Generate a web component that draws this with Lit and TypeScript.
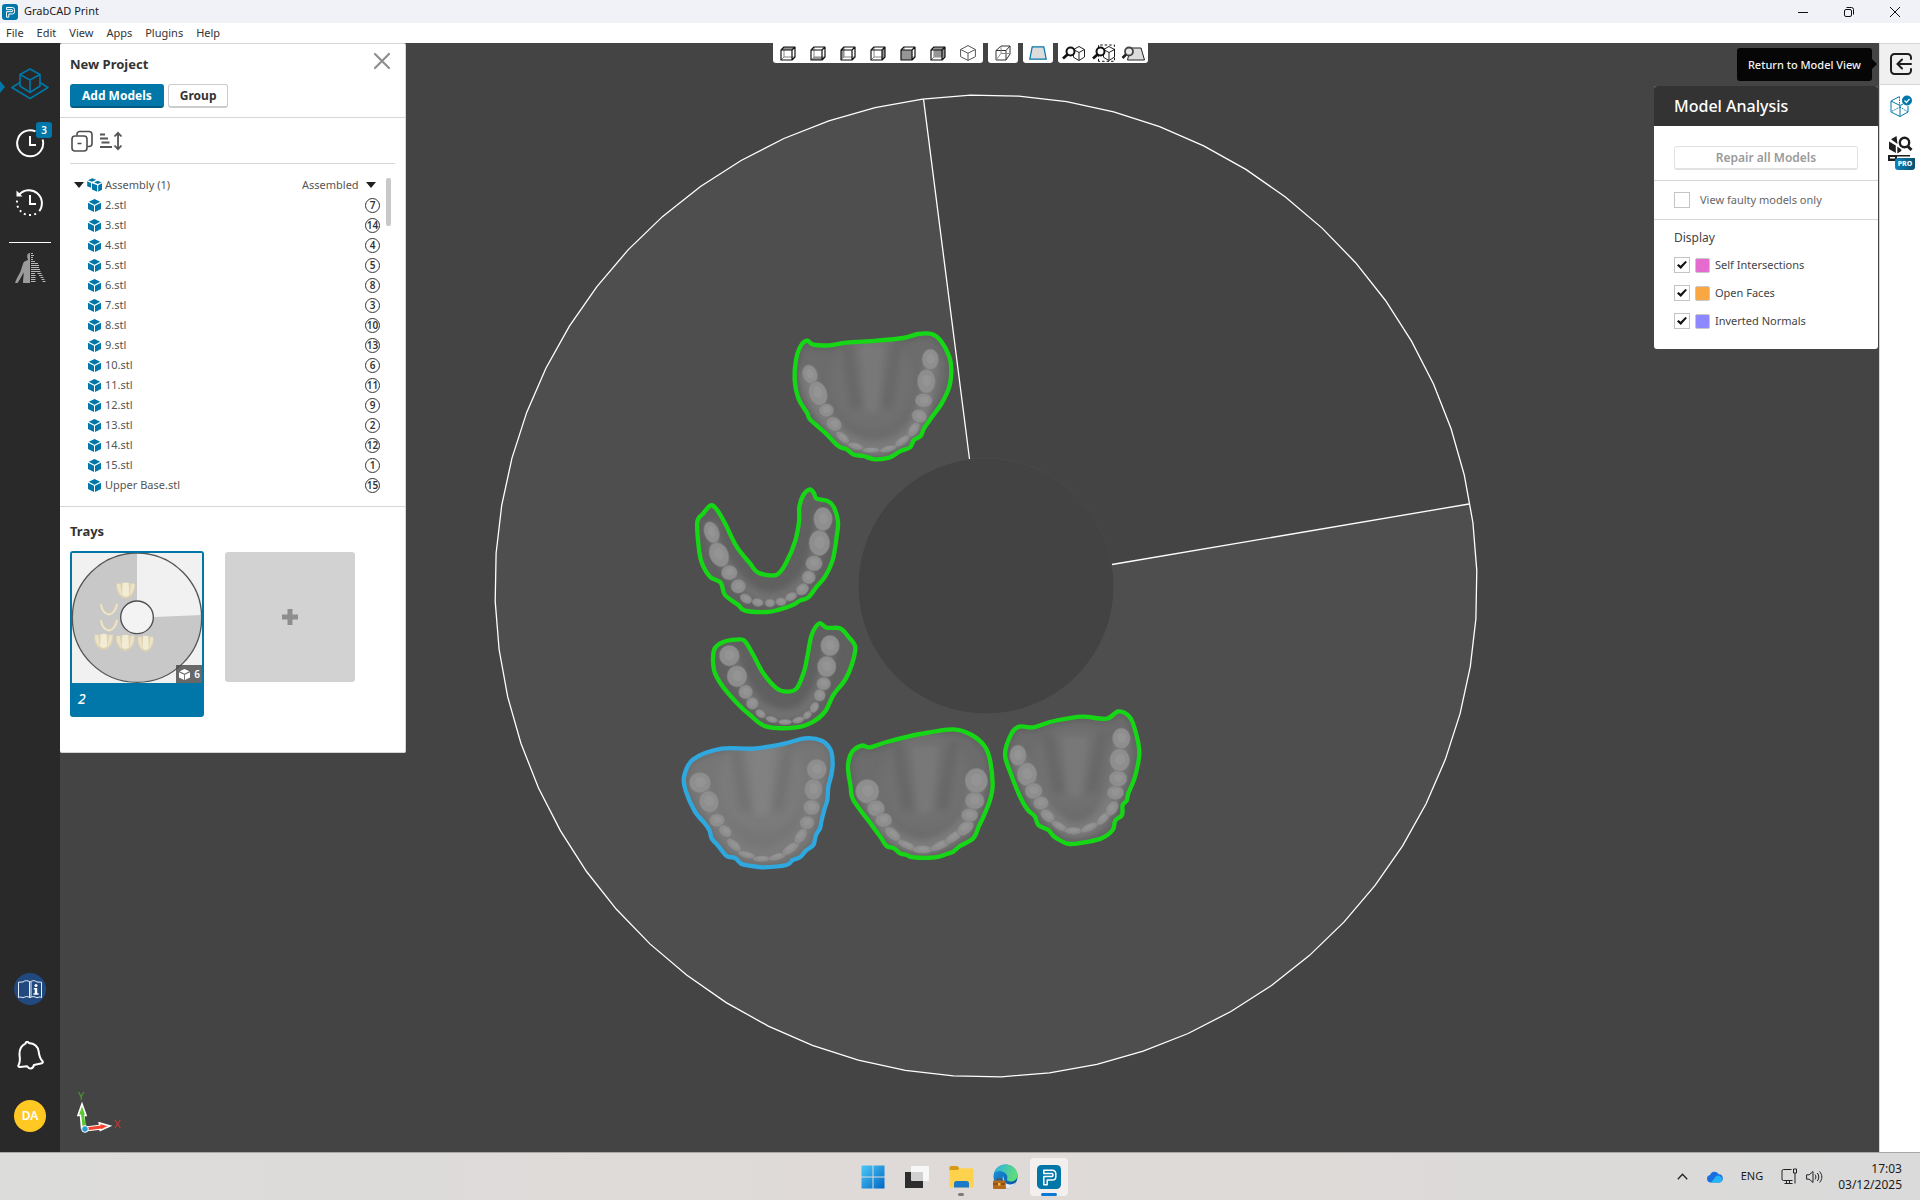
import { LitElement, html, css, svg, nothing } from "lit";
import { customElement, property } from "lit/decorators.js";

type Point = [number, number];
/** cx, cy, rx, ry, rotation in degrees */
type Tooth = [number, number, number, number, number?];

interface Arch {
  name: string;
  origin: Point;
  selected?: boolean;
  outline: Point[];
  teeth: Tooth[];
  palate?: { cx: number; cy: number; rx: number; ry: number };
  ridge: Point[];
}

/** Closed Catmull-Rom curve through the points, as an SVG path. */
function smooth(points: Point[], closed = true): string {
  const n = points.length;
  const at = (i: number): Point =>
    closed ? points[(i + n) % n] : points[Math.max(0, Math.min(n - 1, i))];
  let d = `M${points[0][0]} ${points[0][1]}`;
  const last = closed ? n : n - 1;
  for (let i = 0; i < last; i++) {
    const [p0, p1, p2, p3] = [at(i - 1), at(i), at(i + 1), at(i + 2)];
    const c1 = [p1[0] + (p2[0] - p0[0]) / 6, p1[1] + (p2[1] - p0[1]) / 6];
    const c2 = [p2[0] - (p3[0] - p1[0]) / 6, p2[1] - (p3[1] - p1[1]) / 6];
    d += `C${c1.map((v) => v.toFixed(1)).join(" ")} ${c2.map((v) => v.toFixed(1)).join(" ")} ${p2[0]} ${p2[1]}`;
  }
  return closed ? d + "Z" : d;
}

const ARCHES: Arch[] = [
  {
    name: "Upper arch 1",
    origin: [670, 320],
    outline: [[412, 62], [430, 74], [480, 76], [530, 68], [620, 62], [700, 54], [745, 42], [785, 42], [812, 62], [838, 110], [844, 150], [838, 200], [815, 250], [785, 292], [762, 325], [752, 348], [732, 360], [720, 382], [690, 394], [660, 412], [615, 418], [580, 408], [552, 404], [530, 388], [505, 378], [465, 338], [420, 298], [412, 280], [385, 235], [374, 180], [378, 120], [392, 78]],
    palate: { cx: 605, cy: 180, rx: 62, ry: 120 },
    ridge: [[410, 150], [430, 230], [480, 310], [530, 360], [615, 385], [700, 355], [750, 290], [775, 200], [785, 120]],
    teeth: [[420, 163, 22, 29, -20], [444, 220, 27, 37, -20], [469, 271, 22, 20], [492, 312, 24, 20, 30], [518, 352, 24, 12, 40], [557, 378, 24, 10, 15], [603, 390, 26, 8], [655, 386, 26, 9, -15], [697, 362, 26, 11, -35], [731, 328, 24, 14, -55], [748, 288, 23, 20, 20], [761, 241, 26, 21], [769, 184, 27, 36], [781, 118, 25, 31]],
  },
  {
    name: "Lower arch 1",
    origin: [670, 320],
    outline: [[122, 556], [140, 568], [165, 610], [200, 680], [240, 730], [265, 758], [320, 764], [350, 725], [375, 665], [387, 605], [388, 560], [400, 525], [420, 508], [432, 520], [440, 536], [475, 544], [492, 562], [504, 605], [500, 650], [488, 720], [465, 770], [440, 800], [415, 832], [390, 842], [370, 854], [330, 868], [290, 876], [225, 872], [205, 855], [165, 825], [152, 788], [120, 770], [96, 730], [86, 680], [82, 605], [100, 580]],
    ridge: [[122, 610], [147, 700], [205, 780], [250, 820], [300, 835], [360, 815], [415, 760], [440, 680], [455, 580]],
    teeth: [[125, 637, 22, 33, -20], [147, 704, 28, 38, -25], [178, 758, 24, 22], [205, 799, 22, 21], [228, 836, 19, 13, 30], [263, 847, 17, 12, 10], [300, 849, 15, 12], [333, 845, 16, 12], [363, 830, 18, 12, -25], [397, 808, 20, 16, -35], [416, 772, 20, 20], [432, 730, 25, 23], [448, 669, 31, 38], [459, 597, 28, 35]],
  },
  {
    name: "Lower arch 2",
    origin: [670, 600],
    outline: [[212, 118], [228, 128], [250, 165], [280, 220], [320, 265], [350, 275], [380, 265], [402, 215], [412, 170], [425, 105], [448, 70], [470, 83], [510, 85], [535, 110], [556, 142], [545, 195], [525, 240], [490, 285], [465, 335], [430, 365], [380, 382], [290, 380], [240, 345], [200, 308], [155, 255], [132, 210], [132, 150], [160, 126]],
    ridge: [[185, 160], [215, 240], [260, 310], [310, 340], [350, 345], [400, 330], [445, 270], [470, 190], [480, 130]],
    teeth: [[178, 167, 30, 31], [201, 229, 30, 32], [227, 276, 21, 21], [247, 310, 18, 18], [272, 341, 16, 11, 35], [305, 358, 18, 9, 15], [345, 366, 20, 8], [385, 360, 18, 9, -15], [412, 345, 14, 10, -40], [433, 322, 12, 17, 30], [449, 286, 17, 18], [461, 251, 21, 19], [470, 200, 28, 31], [480, 137, 28, 31]],
  },
  {
    name: "Upper arch 2",
    origin: [670, 600],
    selected: true,
    outline: [[405, 415], [455, 422], [482, 450], [488, 490], [484, 525], [475, 560], [472, 600], [464, 625], [455, 660], [450, 685], [438, 705], [430, 735], [408, 752], [390, 772], [368, 780], [350, 795], [280, 802], [245, 798], [215, 792], [195, 774], [170, 768], [145, 738], [125, 715], [118, 690], [100, 665], [75, 635], [48, 575], [42, 530], [70, 478], [155, 446], [250, 446], [340, 432]],
    palate: { cx: 275, cy: 550, rx: 66, ry: 120 },
    ridge: [[90, 548], [120, 620], [170, 700], [220, 750], [280, 765], [340, 745], [400, 690], [430, 590], [440, 508]],
    teeth: [[90, 548, 32, 31], [117, 605, 29, 33, -20], [141, 661, 23, 20], [166, 693, 22, 16, 40], [192, 735, 26, 13, 40], [230, 764, 27, 10, 15], [275, 776, 27, 9], [322, 770, 27, 10, -15], [362, 745, 30, 13, -35], [392, 708, 26, 15, -55], [411, 668, 22, 20], [425, 622, 25, 23], [430, 568, 27, 32], [440, 508, 30, 31]],
  },
  {
    name: "Upper arch 3",
    origin: [670, 600],
    outline: [[575, 437], [600, 442], [650, 426], [750, 402], [850, 388], [905, 405], [945, 440], [960, 480], [968, 550], [964, 585], [956, 612], [938, 655], [926, 680], [910, 715], [870, 738], [850, 755], [830, 762], [795, 772], [730, 772], [710, 765], [690, 760], [672, 745], [650, 738], [632, 712], [605, 675], [550, 600], [542, 560], [534, 500], [545, 458]],
    palate: { cx: 765, cy: 545, rx: 68, ry: 120 },
    ridge: [[592, 574], [625, 650], [680, 715], [760, 740], [840, 710], [895, 650], [919, 542]],
    teeth: [[592, 574, 35, 36], [618, 625, 26, 24], [641, 660, 25, 21], [668, 702, 28, 15, 40], [710, 735, 30, 11, 25], [758, 748, 30, 12], [812, 735, 34, 12, -25], [852, 710, 32, 13, -35], [886, 684, 28, 18, -40], [899, 645, 25, 20], [914, 602, 29, 26], [919, 542, 34, 37]],
  },
  {
    name: "Upper arch 4",
    origin: [670, 600],
    outline: [[1048, 380], [1090, 382], [1140, 366], [1190, 356], [1240, 350], [1310, 356], [1345, 334], [1380, 352], [1398, 400], [1408, 460], [1395, 530], [1375, 580], [1370, 602], [1358, 615], [1356, 645], [1336, 662], [1328, 690], [1295, 715], [1250, 726], [1200, 732], [1172, 722], [1150, 708], [1135, 690], [1105, 675], [1095, 650], [1072, 628], [1050, 590], [1022, 520], [1005, 462], [1025, 400]],
    palate: { cx: 1215, cy: 505, rx: 66, ry: 105 },
    ridge: [[1044, 466], [1075, 540], [1120, 620], [1170, 670], [1215, 690], [1270, 670], [1320, 600], [1345, 520], [1354, 415]],
    teeth: [[1044, 466, 25, 31], [1071, 523, 30, 35], [1091, 573, 26, 24], [1113, 609, 23, 20], [1133, 647, 24, 16, 40], [1168, 678, 26, 11, 30], [1210, 692, 26, 11], [1258, 682, 28, 11, -25], [1300, 655, 26, 12, -45], [1326, 625, 24, 16, -55], [1336, 578, 25, 21], [1344, 536, 27, 24], [1349, 480, 30, 34], [1354, 415, 27, 31]],
  },
];

const MODELS: [string, number][] = [
  ["2.stl", 7], ["3.stl", 14], ["4.stl", 4], ["5.stl", 5], ["6.stl", 8],
  ["7.stl", 3], ["8.stl", 10], ["9.stl", 13], ["10.stl", 6], ["11.stl", 11],
  ["12.stl", 9], ["13.stl", 2], ["14.stl", 12], ["15.stl", 1], ["Upper Base.stl", 15],
];

const resets = css`
  * {
    box-sizing: border-box;
  }
  button {
    font: inherit;
    color: inherit;
    background: none;
    border: 0;
    margin: 0;
    padding: 0;
    cursor: pointer;
  }
  svg {
    display: block;
    flex: none;
  }
`;

const logo = (size: number) => html`
  <svg width=${size} height=${size} viewBox="0 0 24 24" aria-hidden="true">
    <rect width="24" height="24" rx="4.5" fill="#0077a8" />
    <path
      d="M6.8 5.200h8.700a3.300 3.300 0 0 1 3.300 3.300v3.200a3.300 3.300 0 0 1-3.300 3.300h-5.300v4.800H6.800v-8.300h8.200a.9.9 0 0 0 .9-.9v-1.200a.9.9 0 0 0-.9-.9H6.800z"
      fill="none" stroke="#fff" stroke-width="1.500" stroke-linejoin="round" />
  </svg>
`;

const solidCube = (size: number, color: string) => html`
  <svg width=${size} height=${size} viewBox="0 0 26 26" fill=${color} aria-hidden="true">
    <path d="M13 0 24.500 5.600 13 11.400 1.500 5.600z" />
    <path d="M0 7.600 12 13.600V26L0 20z" />
    <path d="M26 7.600 14 13.600V26l12-6z" />
  </svg>
`;

const caret = html`
  <svg class="caret" width="10" height="6" viewBox="0 0 10 6" aria-hidden="true">
    <path d="M0 0h10L5 6z" fill="#1f1f1f" />
  </svg>
`;

/* ---------------------------------------------------------------- title bar */

@customElement("app-titlebar")
export class AppTitlebar extends LitElement {
  static styles = [
    resets,
    css`
      :host {
        display: block;
        color: #1b1b1b;
        font-size: 11px;
      }
      .title {
        display: flex;
        align-items: center;
        height: 23px;
        padding: 0 2px;
        gap: 6px;
        background: #f0f2f8;
      }
      .window {
        display: flex;
        margin-left: auto;
        height: 100%;
      }
      .window button {
        display: grid;
        place-items: center;
        width: 46px;
      }
      .menu {
        display: flex;
        align-items: center;
        gap: 13px;
        height: 20px;
        padding-left: 6px;
        background: #fff;
        color: #333;
      }
    `,
  ];

  render() {
    return html`
      <div class="title">
        ${logo(16)}
        <span>GrabCAD Print</span>
        <div class="window">
          <button aria-label="Minimize">
            <svg width="10" height="10" viewBox="0 0 10 10"><path d="M0 5.500h10" stroke="#111" /></svg>
          </button>
          <button aria-label="Restore">
            <svg width="10" height="10" viewBox="0 0 10 10" fill="none" stroke="#111">
              <rect x=".5" y="2.500" width="7" height="7" rx="1.500" />
              <path d="M2.500.5h5a2 2 0 0 1 2 2v5" />
            </svg>
          </button>
          <button aria-label="Close">
            <svg width="10" height="10" viewBox="0 0 10 10"><path d="m0 0 10 10M10 0 0 10" stroke="#111" /></svg>
          </button>
        </div>
      </div>
      <nav class="menu" aria-label="Main menu">
        ${["File", "Edit", "View", "Apps", "Plugins", "Help"].map((m) => html`<button>${m}</button>`)}
      </nav>
    `;
  }
}

/* ----------------------------------------------------------------- left rail */

@customElement("app-rail")
export class AppRail extends LitElement {
  static styles = [
    resets,
    css`
      :host {
        display: flex;
        flex-direction: column;
        align-items: center;
        background: #292929;
        padding: 23px 0 20px;
        color: #fff;
      }
      .group {
        display: flex;
        flex-direction: column;
        align-items: center;
        gap: 23px;
        width: 100%;
      }
      .group button {
        position: relative;
        display: grid;
        place-items: center;
        width: 100%;
        height: 36px;
      }
      .active::before {
        content: "";
        position: absolute;
        left: 0;
        top: 15px;
        border: 6px solid transparent;
        border-left: 5px solid #0077a8;
        border-right: 0;
      }
      .badge {
        position: absolute;
        right: 8px;
        top: -3px;
        width: 16px;
        height: 16px;
        border-radius: 3px;
        background: #0077a8;
        font-size: 10px;
        line-height: 16px;
        font-weight: 600;
      }
      hr {
        width: 42px;
        height: 1px;
        margin: 22px 0 7px;
        border: 0;
        background: #fff;
      }
      .foot {
        display: flex;
        flex-direction: column;
        align-items: center;
        gap: 29px;
        margin-top: auto;
      }
      .foot button {
        display: grid;
        place-items: center;
        width: 32px;
        height: 32px;
      }
      .foot .help {
        margin-bottom: 5px;
      }
      .avatar {
        border-radius: 50%;
        background: #ffc822;
        font-size: 12px;
        font-weight: 600;
      }
    `,
  ];

  render() {
    return html`
      <div class="group">
        <button class="active" aria-label="Models">
          <svg width="38" height="32" viewBox="0 0 38 32" fill="none" stroke="#0077a8" stroke-width="1.600" stroke-linejoin="round">
            <path d="M19 1 29 6.500V18L19 24.500 9 18V6.500zM9 6.500l10 5.500 10-5.500M19 12v12.500" />
            <path d="M9 14.500 1 19.500l18 11 18-11-8-5" />
          </svg>
        </button>
        <button aria-label="Queue, 3 jobs">
          <svg width="30" height="30" viewBox="0 0 30 30" fill="none" stroke="#fff" stroke-width="2">
            <path d="M20.500 3.400A13 13 0 1 0 27.600 11.500" />
            <path d="M15 8v9h6" />
          </svg>
          <span class="badge">3</span>
        </button>
        <button aria-label="History">
          <svg width="30" height="30" viewBox="0 0 30 30" fill="none" stroke="#fff" stroke-width="2">
            <path d="M4.300 7.500A13 13 0 0 1 24.200 24.200" />
            <path d="M21 26.600A13 13 0 0 1 2.600 11" stroke-dasharray="2 3.200" />
            <path d="M15 8v9h6" />
            <path d="M1.500 3.500v6h6z" fill="#fff" stroke="none" />
          </svg>
        </button>
      </div>
      <hr />
      <div class="group">
        <button aria-label="Anatomy">
          <svg width="32" height="32" viewBox="0 0 32 32">
            <g fill="#9b9b9b">
              <path d="M16 1c-2 0-3 1.500-2.800 3.500.1 1.500.5 2.200.8 3-.2 1.200-3.200 1.300-4.200 2.700C8.500 12 7.500 18 5.500 21.500 4 24.500 2 27.500 1 31l2.500 0C6 27 8 24 9.500 20.500c.6 1.800-.6 6.500-.5 10.500H16z" />
            </g>
            <g stroke="#b5b5b5" stroke-width="1">
              <path d="M17 1.500h2M17 3.500h3M17 5.500h2M17 7.500h2M17 9.500h4M17 11.500h7M17 13.500h8M17 15.500h8M17 17.500h9M17 19.500h9.500M17 21.500h4M23.500 21.500h4M17 23.500h4.500M25 23.500h3.500M17 25.500h4.500M26.500 25.500h3M17 27.500h4.500M27.500 27.500h3M17 29.500h4.500M28.500 29.500h3" />
            </g>
          </svg>
        </button>
      </div>
      <div class="foot">
        <button class="help" aria-label="Help">
          <svg width="32" height="32" viewBox="0 0 32 32">
            <circle cx="16" cy="16" r="16" fill="#22497f" />
            <g fill="none" stroke="#e6edf6" stroke-width="1">
              <path d="M16 9c-2.500-1.800-5-1.800-7 0l-4.500.2v15.300c2-.7 3-.5 4.500.3 2.500-1.600 5-1.600 7 0 2-1.600 4.500-1.600 7 0 1.500-.8 2.500-1 4.500-.3V9.200L23 9c-2-1.800-4.500-1.800-7 0z" />
              <path d="M15.500 9v15M17 9v15" />
            </g>
            <g fill="#fff">
              <circle cx="22" cy="12.500" r="1.500" />
              <path d="M19.800 15h3.400v5.300h1.300v1.500h-5v-1.500h1.300v-3.800h-1z" />
            </g>
          </svg>
        </button>
        <button aria-label="Notifications">
          <svg width="28" height="29" viewBox="0 0 28 29" fill="none" stroke="#fff" stroke-width="2" stroke-linejoin="round" stroke-linecap="round">
            <path d="M10.500 1c.8-.4 1.700 0 2.200.9 5.500.3 9.300 3.500 10 8.800.4 3.500.8 6.500 3.800 9.500.6.7.5 1.800-.6 2l-8 1.800c-.2 1.500-.9 3-2.900 3.500-2 .3-3-1-3.800-2.300l-7.500.8c-1 .1-1.800-.9-1.200-1.800 2.500-4 1-7.500 1-11.500C3.600 7.500 6 4.300 9.500 2.700c0-.8.400-1.400 1-1.700z" />
          </svg>
        </button>
        <button class="avatar" aria-label="Account">DA</button>
      </div>
    `;
  }
}

/* ------------------------------------------------------------- project panel */

@customElement("project-panel")
export class ProjectPanel extends LitElement {
  static styles = [
    resets,
    css`
      :host {
        display: flex;
        flex-direction: column;
        background: #fff;
        border: 1px solid #d4d6d6;
        border-left: 0;
        border-radius: 2px;
        font-size: 11px;
        color: #333;
        padding-bottom: 35px;
      }
      .head {
        padding: 8px 14px 9px 10px;
        border-bottom: 1px solid #d6d8d8;
      }
      .row {
        display: flex;
        align-items: center;
        justify-content: space-between;
      }
      h2 {
        margin: 0;
        font-size: 13px;
        line-height: 24px;
        font-weight: 700;
      }
      .close {
        width: 18px;
        height: 18px;
        margin-bottom: 6px;
      }
      .actions {
        display: flex;
        gap: 4px;
        margin-top: 8px;
      }
      .btn {
        height: 24px;
        padding: 0 11px;
        border: 1px solid #ccc;
        border-bottom-width: 2px;
        border-radius: 3px;
        background: #fff;
        font-size: 12px;
        line-height: 20px;
        font-weight: 700;
      }
      .primary {
        border-color: #0077a8 #0077a8 #005b81;
        background: #0077a8;
        color: #fff;
      }
      .tools {
        display: flex;
        align-items: center;
        gap: 6px;
        height: 46px;
        margin: 0 10px;
        border-bottom: 1px solid #d6d8d8;
      }
      .list {
        display: flex;
        height: 342px;
        padding: 11px 14px 0 10px;
        gap: 5px;
      }
      ul {
        flex: 1;
        margin: 0;
        padding: 0;
        list-style: none;
      }
      li {
        display: flex;
        align-items: center;
        height: 20px;
        padding-left: 18px;
        gap: 4px;
      }
      li.assembly {
        padding-left: 4px;
        gap: 3px;
        color: #555;
      }
      .name {
        flex: 1;
        text-align: left;
        color: #555;
      }
      .state {
        display: flex;
        align-items: center;
        gap: 7px;
        padding-right: 5px;
      }
      select {
        appearance: none;
        border: 0;
        padding: 0;
        background: none;
        font: inherit;
        color: inherit;
      }
      .num {
        width: 15px;
        height: 15px;
        margin-right: 1px;
        border: 1px solid #333;
        border-radius: 50%;
        display: flex;
        align-items: center;
        justify-content: center;
        font-size: 10px;
        font-weight: 600;
      }
      .thumb-scroll {
        width: 5px;
        height: 48px;
        margin-top: 3px;
        border-radius: 2px;
        background: #c8c8c8;
      }
      .trays {
        border-top: 1px solid #d6d8d8;
        padding: 12px 10px 0;
      }
      .cards {
        display: flex;
        gap: 21px;
        margin-top: 8px;
      }
      .card {
        position: relative;
        width: 134px;
        padding: 2px;
        border-radius: 3px;
        background: #0077a8;
        color: #fff;
        text-align: left;
      }
      .card .label {
        display: block;
        height: 32px;
        padding-left: 6px;
        font-size: 14px;
        line-height: 32px;
        font-style: italic;
        font-weight: 500;
      }
      .count {
        position: absolute;
        right: 2px;
        top: 114px;
        display: flex;
        align-items: center;
        gap: 4px;
        height: 18px;
        padding: 0 2px 0 3px;
        background: rgba(70, 70, 70, 0.8);
        font-size: 10px;
        font-weight: 600;
      }
      .add {
        display: grid;
        place-items: center;
        width: 130px;
        height: 130px;
        margin-top: 1px;
        border-radius: 3px;
        background: #d2d2d2;
      }
    `,
  ];

  private miniArch(x: number, y: number, kind: "upper" | "lower") {
    return kind === "upper"
      ? svg`<g transform="translate(${x} ${y})">
          <path d="M-27-20Q-24-24-18-21Q0-25 18-21Q24-24 27-20Q31-4 22 10Q12 25 0 24Q-12 25-22 10Q-31-4-27-20z" fill="#ddd2b0" />
          <path d="M-27-19Q-25 6-12 16L-16-20zM27-19Q25 6 12 16L16-20z" fill="#ebe2c8" />
          <path d="M-9-22Q0-25 9-22L11 14Q0 24-11 14z" fill="#f3ecd4" />
        </g>`
      : svg`<g transform="translate(${x} ${y})" fill="none" stroke-linecap="round">
          <path d="M-23-13Q-18 10 0 14Q16 10 21-13" stroke="#d8ceae" stroke-width="7" />
          <path d="M-24-13Q-20 14 0 17Q18 14 24-13" stroke="#f0e8cf" stroke-width="5" />
        </g>`;
  }

  render() {
    return html`
      <div class="head">
        <div class="row">
          <h2>New Project</h2>
          <button class="close" aria-label="Close panel">
            <svg width="18" height="18" viewBox="0 0 18 18"><path d="m2 2 14 14M16 2 2 16" stroke="#8f8f8f" stroke-width="2.200" stroke-linecap="round" /></svg>
          </button>
        </div>
        <div class="actions">
          <button class="btn primary">Add Models</button>
          <button class="btn">Group</button>
        </div>
      </div>
      <div class="tools">
        <button aria-label="Collapse all">
          <svg width="24" height="22" viewBox="0 0 24 22" fill="none" stroke="#4d4d4d" stroke-width="1.600">
            <rect x="2" y="6" width="15" height="15" rx="3" />
            <path d="M7 5.500V4a2.500 2.500 0 0 1 2.500-2.500H19A3 3 0 0 1 22 4.500v9a3 3 0 0 1-3 3h-1.500M7.500 13.500h4" />
          </svg>
        </button>
        <button aria-label="Sort">
          <svg width="23" height="20" viewBox="0 0 23 20" fill="none" stroke="#555" stroke-width="1.800">
            <path d="M0 3.500h5M0 7.500h8M1.500 11.500h8M0 16h12M18 2v16M14.500 5.500 18 1.800l3.500 3.700M14.500 14.500l3.500 3.700 3.500-3.700" />
          </svg>
        </button>
      </div>
      <div class="list">
        <ul>
          <li class="assembly">
            ${caret}
            <svg width="15" height="14" viewBox="0 0 15 14">
              <g fill="#0077a8">
                <path d="M1 2.200 5.200.2l4 1.600-4 2z" />
                <path d="M.2 3.200 4 5v4.800L.2 8.300z" />
                <path d="M7 4.300 10.700 2.700 14.500 4.300 10.700 6z" />
                <path d="M5 5.300 10.200 7.300V13.800L5 11.500z" />
                <path d="M15 5.300 11.200 7.300V13.800L15 11.800z" />
              </g>
            </svg>
            <span class="name">Assembly (1)</span>
            <span class="state">
              <select aria-label="Assembly state"><option>Assembled</option></select>
              ${caret}
            </span>
          </li>
          ${MODELS.map(
            ([name, n]) => html`
              <li>
                ${solidCube(13, "#0077a8")}
                <button class="name">${name}</button>
                <span class="num">${n}</span>
              </li>
            `
          )}
        </ul>
        <div class="thumb-scroll"></div>
      </div>
      <section class="trays">
        <h2>Trays</h2>
        <div class="cards">
          <button class="card">
            <svg width="130" height="130" viewBox="0 0 390 390">
              <rect width="390" height="390" fill="#f1f1f1" />
              <circle cx="195" cy="194" r="193" fill="#c8c8c8" />
              <path d="M195 0A193 193 0 0 1 389 186L195 194z" fill="#f1f1f1" />
              <circle cx="195" cy="194" r="194" fill="none" stroke="#555" stroke-width="4" />
              <circle cx="195" cy="193" r="49" fill="#f3f3f3" stroke="#505050" stroke-width="4" />
              ${this.miniArch(161, 112, "upper")} ${this.miniArch(111, 168, "lower")}
              ${this.miniArch(111, 216, "lower")} ${this.miniArch(95, 266, "upper")}
              ${this.miniArch(160, 269, "upper")}
              <g transform="translate(221 272) scale(.85 1)">${this.miniArch(0, 0, "upper")}</g>
            </svg>
            <span class="count">${solidCube(11, "#fff")}6</span>
            <span class="label">2</span>
          </button>
          <button class="add" aria-label="Add tray">
            <svg width="16" height="16" viewBox="0 0 16 16"><path d="M8 0v16M0 8h16" stroke="#8e8e8e" stroke-width="5" /></svg>
          </button>
        </div>
      </section>
    `;
  }
}

/* -------------------------------------------------------------- view toolbar */

type Face = "top" | "bottom" | "left" | "right" | "front" | "back";

const FACES: Record<Face, string> = {
  top: "M1 5 4 2h11l-3 3z",
  bottom: "M1 15 4 12h11l-3 3z",
  left: "M1 5 4 2v10l-3 3z",
  right: "M12 5l3-3v10l-3 3z",
  front: "M1 5h11v10H1z",
  back: "M4 2h11v10H4z",
};

@customElement("view-toolbar")
export class ViewToolbar extends LitElement {
  static styles = [
    resets,
    css`
      :host {
        display: flex;
        gap: 5px;
        padding-left: 1px;
      }
      .group {
        display: flex;
        background: #fff;
        border-radius: 0 0 3px 3px;
      }
      button {
        display: grid;
        place-items: center;
        width: 30px;
        height: 20px;
      }
    `,
  ];

  private face(f: Face) {
    return html`
      <button aria-label="${f} view">
        <svg width="16" height="16" viewBox="0 0 16 16" fill="none">
          <path d="M4 2v10h11M4 12l-3 3" stroke="#777" stroke-width=".9" />
          <path d=${FACES[f]} fill="#959595" />
          <path d="M1 5h11v10H1zM1 5l3-3h11v10l-3 3M12 5l3-3" stroke="#111" stroke-width="1.200" stroke-linejoin="round" />
        </svg>
      </button>
    `;
  }

  private lensCube(dashed: boolean) {
    return html`
      <button aria-label=${dashed ? "Zoom to selection" : "Zoom to fit"}>
        <svg width="24" height="18" viewBox="0 0 24 18" fill="none">
          <path d="M12.500 5.500 18 2.500l5.500 3v7.500L18 16.500l-5.500-3.200zM12.500 5.500l5.500 3 5.500-3M18 8.500v8" stroke="#222" />
          ${dashed ? svg`<path d="M7.500 17.300V1h16v16.300z" stroke="#111" stroke-dasharray="2.500 2" />` : nothing}
          <circle cx="9.500" cy="7.500" r="4" fill="#fff" stroke="#111" stroke-width="2" />
          <path d="M6.500 10.500 2 14.500" stroke="#111" stroke-width="2.800" />
        </svg>
      </button>
    `;
  }

  render() {
    return html`
      <div class="group">
        ${(["top", "bottom", "left", "right", "front", "back"] as Face[]).map((f) => this.face(f))}
        <button aria-label="Isometric view">
          <svg width="16" height="16" viewBox="0 0 16 16" fill="none" stroke="#555">
            <path d="M8 .6 15.400 4.500v7.200L8 15.400.6 11.700V4.500zM.6 4.500 8 8.200l7.400-3.700M8 8.200v7.200" />
          </svg>
        </button>
      </div>
      <div class="group">
        <button aria-label="Perspective">
          <svg width="16" height="16" viewBox="0 0 16 16" fill="none" stroke="#333">
            <path d="M1 5.500h10v9.500H1zM1 5.500 6 1l9 0-4 4.500M15 1v8l-4 6" />
            <path d="M6 1v7.500h8.500M6 8.500 1 15" stroke="#888" />
          </svg>
        </button>
      </div>
      <div class="group">
        <button aria-label="Show tray">
          <svg width="18" height="14" viewBox="0 0 18 14"><path d="M3.200.8h11.600l2.400 12.400H.8z" fill="#dcdcdc" stroke="#0077a8" stroke-width="1.200" /></svg>
        </button>
      </div>
      <div class="group">
        ${this.lensCube(false)} ${this.lensCube(true)}
        <button aria-label="Zoom to tray">
          <svg width="24" height="18" viewBox="0 0 24 18" fill="none">
            <path d="M9.500 4h10.500l3.500 12H6.500z" fill="#dcdcdc" stroke="#222" />
            <circle cx="8" cy="7.500" r="4" fill="#e6e6e6" stroke="#444" stroke-width="1.800" />
            <path d="M5 10.500 1.500 14" stroke="#222" stroke-width="2.600" />
          </svg>
        </button>
      </div>
    `;
  }
}

/* ------------------------------------------------------------------ 3D scene */

@customElement("tray-scene")
export class TrayScene extends LitElement {
  static styles = [
    resets,
    css`
      :host {
        display: block;
        position: relative;
        overflow: hidden;
        background: #444;
      }
      .scene {
        position: absolute;
        inset: 0;
        width: 100%;
        height: 100%;
      }
      .axis {
        font-size: 11px;
      }
    `,
  ];

  private palate(p: NonNullable<Arch["palate"]>, selected?: boolean) {
    return svg`
      <g filter="url(#soft)">
        <ellipse cx=${p.cx} cy=${p.cy} rx=${p.rx * 2} ry=${p.ry * 1.200} fill=${selected ? "#7a7a7a" : "#707070"} />
        <path
          d="M${p.cx - p.rx * 1.500} ${p.cy - p.ry}L${p.cx - p.rx} ${p.cy - p.ry}L${p.cx - p.rx * 0.500} ${p.cy + p.ry * 0.700}L${p.cx - p.rx} ${p.cy + p.ry * 0.700}z
             M${p.cx + p.rx * 1.500} ${p.cy - p.ry}L${p.cx + p.rx} ${p.cy - p.ry}L${p.cx + p.rx * 0.500} ${p.cy + p.ry * 0.700}L${p.cx + p.rx} ${p.cy + p.ry * 0.700}z"
          fill=${selected ? "#727272" : "#686868"} />
        <path
          d="M${p.cx - p.rx * 0.600} ${p.cy - p.ry * 0.900}L${p.cx + p.rx * 0.600} ${p.cy - p.ry * 0.900}L${p.cx + p.rx * 0.300} ${p.cy + p.ry * 0.800}L${p.cx - p.rx * 0.300} ${p.cy + p.ry * 0.800}z"
          fill=${selected ? "#818181" : "#787878"} />
      </g>
    `;
  }

  private arch(a: Arch, i: number) {
    const outline = smooth(a.outline);
    const color = a.selected ? "#2ea8df" : "#16d716";
    return svg`
      <g transform="translate(${a.origin[0]} ${a.origin[1]}) scale(.33333)">
        <clipPath id="arch-${i}"><path d=${outline} /></clipPath>
        <g clip-path="url(#arch-${i})">
          <path d=${outline} fill=${a.palate ? (a.selected ? "#767676" : "#6c6c6c") : "#606060"} />
          <path d=${outline} fill="none" stroke=${a.selected ? "#6c6c6c" : "#5e5e5e"} stroke-width="24" filter="url(#soft)" />
          ${a.palate ? this.palate(a.palate, a.selected) : nothing}
          <path d=${smooth(a.ridge, false)} fill="none" stroke=${a.palate ? "#7c7c7c" : "#727272"} stroke-width=${a.palate ? 40 : 32} filter="url(#soft)" />
          ${a.teeth.map(
            ([cx, cy, rx, ry, rot = 0]) => svg`
              <ellipse cx=${cx} cy=${cy} rx=${rx} ry=${ry} transform="rotate(${rot} ${cx} ${cy})" fill="#8e8e8e" stroke="#7d7d7d" stroke-width="2" />
              <ellipse cx=${cx + 1} cy=${cy - 2} rx=${rx * 0.500} ry=${ry * 0.500} transform="rotate(${rot} ${cx} ${cy})" fill="#949494" />`
          )}
        </g>
        <path d=${outline} fill="none" stroke=${color} stroke-width="13" stroke-linejoin="round" />
      </g>
    `;
  }

  /** The rim is drawn as short chords, as the renderer tessellates it. */
  private rim(cx: number, cy: number, r: number, sides: number, phase: number): string {
    return Array.from({ length: sides }, (_, i) => {
      const t = ((i / sides) * 360 + phase) * (Math.PI / 180);
      return `${(cx + r * Math.cos(t)).toFixed(1)},${(cy + r * Math.sin(t)).toFixed(1)}`;
    }).join(" ");
  }

  render() {
    const rim = this.rim(986, 586, 491, 64, -1.8);
    return html`
      <svg class="scene" viewBox="60 43 1819 1109" preserveAspectRatio="xMidYMid slice" role="img" aria-label="Build tray">
        <filter id="soft" x="-30%" y="-30%" width="160%" height="160%"><feGaussianBlur stdDeviation="9" /></filter>
        <polygon points=${rim} fill="#4e4e4e" />
        <path d="M923.500 99A490 490 0 0 1 1469 504L1112 564.500A128 128 0 0 0 969.500 459z" fill="#444" />
        <circle cx="986" cy="586" r="127.500" fill="#434343" />
        <polygon points=${rim} fill="none" stroke="#fff" stroke-width="1.300" />
        <path d="M923.500 99 969.500 459M1112 564.500 1469 504" stroke="#fff" stroke-width="1.300" />
        ${ARCHES.map((a, i) => this.arch(a, i))}
        <g transform="translate(0 940) scale(.33333)">
          <path d="m250 566-4-48" stroke="#fff" stroke-width="15" />
          <path d="m246 492 12 34h-24z" fill="#5ac832" stroke="#fff" stroke-width="5" />
          <path d="m252 560-5-44" stroke="#5ac832" stroke-width="9" />
          <path d="m262 566 45-5" stroke="#fff" stroke-width="15" />
          <path d="m330 558-32-9 3 22z" fill="#f8402f" stroke="#fff" stroke-width="5" />
          <path d="m262 566 48-6" stroke="#f8402f" stroke-width="9" />
          <circle cx="255" cy="567" r="10" fill="#2b9bd0" stroke="#fff" stroke-width="3" />
        </g>
        <text class="axis" x="78" y="1100" fill="#4e9a35">Y</text>
        <text class="axis" x="114" y="1128" fill="#d0342b">X</text>
      </svg>
    `;
  }
}

/* ------------------------------------------------------------ model analysis */

@customElement("analysis-panel")
export class AnalysisPanel extends LitElement {
  static styles = [
    resets,
    css`
      :host {
        display: block;
        background: #fff;
        border-radius: 3px;
        overflow: hidden;
        font-size: 11px;
        color: #444;
      }
      h2 {
        margin: 0;
        padding-left: 20px;
        background: #333;
        color: #fff;
        font-size: 16px;
        line-height: 40px;
        font-weight: 500;
      }
      .repair {
        padding: 20px 20px 10px;
        border-bottom: 1px solid #d6d8d8;
      }
      .repair button {
        width: 100%;
        height: 24px;
        border: 1px solid #e2e2e2;
        border-bottom-width: 2px;
        border-radius: 3px;
        color: #9a9a9a;
        font-size: 12px;
        line-height: 20px;
        font-weight: 600;
      }
      label {
        display: flex;
        align-items: center;
      }
      .faulty {
        gap: 10px;
        height: 39px;
        padding-left: 20px;
        border-bottom: 1px solid #d6d8d8;
        color: #666;
      }
      .display {
        display: flex;
        flex-direction: column;
        gap: 12px;
        padding: 9px 20px 20px;
      }
      .display h3 {
        margin: 0;
        font-size: 12px;
        line-height: 18px;
        height: 16px;
        font-weight: 400;
      }
      .display label {
        gap: 5px;
        height: 16px;
      }
      input {
        appearance: none;
        display: grid;
        place-items: center;
        width: 16px;
        height: 16px;
        margin: 0;
        border: 1px solid #c4c4c4;
        background: #fff;
      }
      input:checked::before {
        content: "";
        width: 10px;
        height: 8px;
        background: #111;
        clip-path: polygon(0 55%, 16% 38%, 36% 58%, 84% 0, 100% 14%, 38% 100%);
      }
      .swatch {
        width: 15px;
        height: 15px;
        border: 1px solid #c9c9c9;
        border-radius: 2px;
      }
      .pink {
        background: #e56cce;
      }
      .orange {
        background: #f9a743;
      }
      .violet {
        background: #8d88ff;
      }
    `,
  ];

  render() {
    const kinds = [
      ["Self Intersections", "pink"],
      ["Open Faces", "orange"],
      ["Inverted Normals", "violet"],
    ];
    return html`
      <h2>Model Analysis</h2>
      <div class="repair"><button disabled>Repair all Models</button></div>
      <label class="faulty"><input type="checkbox" />View faulty models only</label>
      <div class="display">
        <h3>Display</h3>
        ${kinds.map(
          ([name, color]) => html`
            <label><input type="checkbox" checked /><span class="swatch ${color}"></span>${name}</label>
          `
        )}
      </div>
    `;
  }
}

/* ---------------------------------------------------------------- right rail */

@customElement("mode-rail")
export class ModeRail extends LitElement {
  static styles = [
    resets,
    css`
      :host {
        display: flex;
        flex-direction: column;
        background: #fff;
        border-left: 1px solid #d6d6d6;
      }
      button {
        position: relative;
        display: grid;
        place-items: center;
        width: 100%;
        height: 42px;
        padding-left: 2px;
      }
      .current {
        background: #f0f0f0;
        border-top: 1px solid #d6d8d8;
        border-bottom: 1px solid #d6d8d8;
      }
      .tip {
        position: absolute;
        right: 48px;
        top: 4px;
        padding: 0 11px;
        border-radius: 3px;
        background: #060606;
        color: #f2f2f2;
        font-size: 11px;
        line-height: 33px;
        font-weight: 500;
        white-space: nowrap;
      }
      .tip::after {
        content: "";
        position: absolute;
        left: 100%;
        top: 11px;
        border: 5px solid transparent;
        border-left-color: #060606;
        border-right: 0;
      }
      .pro {
        height: 44px;
        margin-top: 2px;
      }
      .tag {
        position: absolute;
        right: 5px;
        bottom: 3px;
        width: 20px;
        border-radius: 3px 0 3px 3px;
        background: linear-gradient(90deg, #0b86bb, #0a4f70);
        color: #fff;
        font-size: 7px;
        line-height: 12px;
        font-weight: 800;
      }
    `,
  ];

  render() {
    return html`
      <button class="current" aria-label="Return to Model View">
        <svg width="22" height="22" viewBox="0 0 22 22" fill="none" stroke="#1e1e1e" stroke-width="2" stroke-linecap="round">
          <path d="M21 6V4.500A3.500 3.500 0 0 0 17.500 1h-13A3.500 3.500 0 0 0 1 4.500v13A3.500 3.500 0 0 0 4.500 21h13a3.500 3.500 0 0 0 3.500-3.500V16" />
          <path d="M21 11H7.500M12 6.500 7.500 11l4.500 4.500" />
        </svg>
        <span class="tip" role="tooltip">Return to Model View</span>
      </button>
      <button aria-label="Model analysis">
        <svg width="22" height="22" viewBox="0 0 22 22" fill="none" stroke="#0077a8">
          <path d="M9.500 1.500 1 6v11l9 4.500 8-4.500v-6M1 6l9 4.500V21.500M10 10.500l3-1.500" />
          <path d="M9.500 2v8M10 12 1.500 16.500M10 12l8 5" stroke-dasharray="1.500 1" />
          <circle cx="17" cy="5.500" r="5" fill="#0077a8" stroke="none" />
          <path d="m14.500 5.500 2 2 3-3.600" stroke="#fff" stroke-width="1.300" />
        </svg>
      </button>
      <button class="pro" aria-label="Tray inspection, PRO">
        <svg width="26" height="30" viewBox="0 0 26 30" fill="#1e1e1e">
          <path d="M8.500 0 3 3.200 9.500 8z" />
          <path d="M1 5.500 7.800 9.500V17L1 13z" />
          <path d="M9.300 10.500l4 3V15L9.300 17.500z" />
          <circle cx="16.500" cy="6.500" r="4.700" fill="none" stroke="#1e1e1e" stroke-width="2.400" />
          <path d="m19.500 10 4 4" stroke="#1e1e1e" stroke-width="3" />
          <path d="M0 19h9v6H0zM2 21v1.500h5V21z" fill-rule="evenodd" />
          <path d="M9 19h13v1.500H9z" />
        </svg>
        <span class="tag">PRO</span>
      </button>
    `;
  }
}

/* ------------------------------------------------------------------- taskbar */

@customElement("system-taskbar")
export class SystemTaskbar extends LitElement {
  @property() time = "17:03";
  @property() date = "03/12/2025";

  static styles = [
    resets,
    css`
      :host {
        display: grid;
        grid-template-columns: 1fr auto 1fr;
        align-items: center;
        box-sizing: border-box;
        height: 48px;
        border-top: 1px solid #a9a8a7;
        background: linear-gradient(90deg, #dcdcdb, #dfdad8 50%, #dadada);
        color: #1b1b1b;
        font-size: 12px;
      }
      .apps {
        grid-column: 2;
        display: flex;
        gap: 6px;
        padding-left: 2px;
      }
      .apps button {
        position: relative;
        display: grid;
        place-items: center;
        width: 38px;
        height: 38px;
        border-radius: 4px;
      }
      .apps .open {
        background: #f2efee;
      }
      .mark {
        position: absolute;
        bottom: 0;
        width: 6px;
        height: 3px;
        border-radius: 2px;
        background: #7b7b7b;
      }
      .open .mark {
        width: 16px;
        background: #0a78d4;
      }
      .status {
        display: flex;
        align-items: center;
        justify-content: flex-end;
        padding-right: 18px;
      }
      .lang {
        margin: 0 18px;
        font-size: 11px;
      }
      .net {
        margin-right: 8px;
      }
      .cloud {
        margin-left: 19px;
      }
      .clock {
        margin-left: 15px;
        text-align: right;
        line-height: 16px;
      }
    `,
  ];

  render() {
    return html`
      <div class="apps">
        <button aria-label="Start">
          <svg width="24" height="24" viewBox="0 0 24 24">
            <linearGradient id="win" x1="0" y1="0" x2="1" y2="1"><stop offset="0" stop-color="#4cc8f6" /><stop offset="1" stop-color="#0067c6" /></linearGradient>
            <path d="M.5.500h11v11H.5zM12.500.5h11v11h-11zM.5 12.500h11v11H.5zM12.500 12.500h11v11h-11z" fill="url(#win)" />
          </svg>
        </button>
        <button aria-label="Task view">
          <svg width="24" height="24" viewBox="0 0 24 24">
            <rect x="0" y="7" width="18" height="16" fill="#2d2d2d" />
            <rect x="6" y="1" width="18" height="15" rx="1" fill="#fff" opacity=".78" />
          </svg>
        </button>
        <button aria-label="File Explorer">
          <svg width="25" height="24" viewBox="0 0 25 24">
            <path d="M.5 2.500A1.500 1.500 0 0 1 2 1h6.500l2 2.500V6H.5z" fill="#d69a16" />
            <path d="M.5 5h8l2-1.800H23A1.500 1.500 0 0 1 24.500 4.700V21.500A1 1 0 0 1 23.500 22.500h-22a1 1 0 0 1-1-1z" fill="#ffd24d" />
            <path d="M5 22.500v-4a2.500 2.500 0 0 1 2.500-2.500h10a2.500 2.500 0 0 1 2.500 2.500v4z" fill="#1a79c8" />
          </svg>
          <span class="mark"></span>
        </button>
        <button aria-label="Edge">
          <svg width="25" height="25" viewBox="0 0 25 25">
            <linearGradient id="edge-a" x1="0" y1="0" x2="1" y2=".3"><stop offset="0" stop-color="#2bb0e8" /><stop offset="1" stop-color="#5fdc7a" /></linearGradient>
            <linearGradient id="edge-b" x1="0" y1="0" x2="1" y2="1"><stop offset="0" stop-color="#1a9be0" /><stop offset="1" stop-color="#0c4a9c" /></linearGradient>
            <circle cx="12.500" cy="12.500" r="12" fill="url(#edge-b)" />
            <path d="M1 9.500C3 3.500 7.500.5 12.500.5c7 0 12 5 12 10.500 0 4-3 6.500-6.500 6.500-2.500 0-4.500-1-4-2.500 1-1.500.5-6-5-7.500C5.500 6.500 2.500 7.500 1 9.500z" fill="url(#edge-a)" />
            <path d="M10 12c-1.500 5 3 9 8 8.500 2.500-.3 4-1.500 5-2.500-2 4.500-6 6.500-10 6.500z" fill="#e4e9ee" />
            <rect x="0" y="16.500" width="12.500" height="8.500" rx="1" fill="#b5691b" />
            <path d="M4 16.500V15h4.500v1.500" stroke="#7a420c" fill="none" />
            <path d="M0 20h12.500" stroke="#6d3b0b" />
            <rect x="5" y="19" width="2.500" height="2.500" fill="#f2c04d" />
          </svg>
        </button>
        <button class="open" aria-label="GrabCAD Print">${logo(24)}<span class="mark"></span></button>
      </div>
      <div class="status">
        <button aria-label="Hidden icons">
          <svg width="11" height="7" viewBox="0 0 11 7"><path d="M.8 6.200 5.500 1.200l4.700 5" fill="none" stroke="#222" stroke-width="1.300" /></svg>
        </button>
        <button class="cloud" aria-label="OneDrive">
          <svg width="16" height="12" viewBox="0 0 16 12">
            <path d="M4 11.500A3.800 3.800 0 0 1 3 4a4.800 4.800 0 0 1 8.800-.8A4.200 4.200 0 0 1 12.500 11.500z" fill="#1a6fe0" />
            <path d="M4 11.500 8 6.500a4 4 0 0 1 5.500-1A3.200 3.200 0 0 1 12.500 11.500z" fill="#23b4f5" />
          </svg>
        </button>
        <button class="lang">ENG</button>
        <button class="net" aria-label="Network">
          <svg width="17" height="17" viewBox="0 0 17 17" fill="none" stroke="#222">
            <path d="M10.500 1.500h-8a1.500 1.500 0 0 0-1.500 1.500v8a1.500 1.500 0 0 0 1.500 1.500h9M5.500 12.500v3M8.500 12.500v3M3.500 15.500h8" />
            <path d="M12.500 1h3v4h-3zM14 5v10.500" />
          </svg>
        </button>
        <button aria-label="Volume">
          <svg width="17" height="14" viewBox="0 0 17 14" fill="none" stroke="#222">
            <path d="M.6 4.800h2.600L7 1.500v11L3.200 9.200H.6zM9 4.500c1.200 1.500 1.200 3.500 0 5M11.300 3c2 2.500 2 5.500 0 8M13.600 1.500c3 3.500 3 7.500 0 11" />
          </svg>
        </button>
        <div class="clock">${this.time}<br />${this.date}</div>
      </div>
    `;
  }
}

/* ---------------------------------------------------------------------- root */

@customElement("app-root")
export class AppRoot extends LitElement {
  static styles = css`
    :host {
      display: grid;
      grid-template-rows: auto 1fr auto;
      min-height: 100vh;
      font-family: "Noto Sans", "Open Sans", sans-serif;
      font-size: 12px;
      line-height: 1.3;
      overflow: hidden;
    }
    .main {
      display: grid;
      grid-template-columns: 60px auto 1fr auto 41px;
      grid-template-rows: 1fr;
      align-items: start;
    }
    app-rail {
      grid-area: 1 / 1;
      align-self: stretch;
    }
    tray-scene {
      grid-area: 1 / 2 / 2 / 5;
      align-self: stretch;
    }
    project-panel {
      grid-area: 1 / 2;
      width: 345px;
      z-index: 1;
    }
    view-toolbar {
      grid-area: 1 / 1 / 2 / -1;
      justify-self: center;
      z-index: 1;
    }
    analysis-panel {
      grid-area: 1 / 4;
      width: 224px;
      margin: 43px 1px 0 0;
      z-index: 1;
    }
    mode-rail {
      grid-area: 1 / 5;
      align-self: stretch;
      z-index: 2;
    }
  `;

  render() {
    return html`
      <app-titlebar></app-titlebar>
      <div class="main">
        <app-rail></app-rail>
        <tray-scene></tray-scene>
        <project-panel></project-panel>
        <view-toolbar></view-toolbar>
        <analysis-panel></analysis-panel>
        <mode-rail></mode-rail>
      </div>
      <system-taskbar></system-taskbar>
    `;
  }
}
